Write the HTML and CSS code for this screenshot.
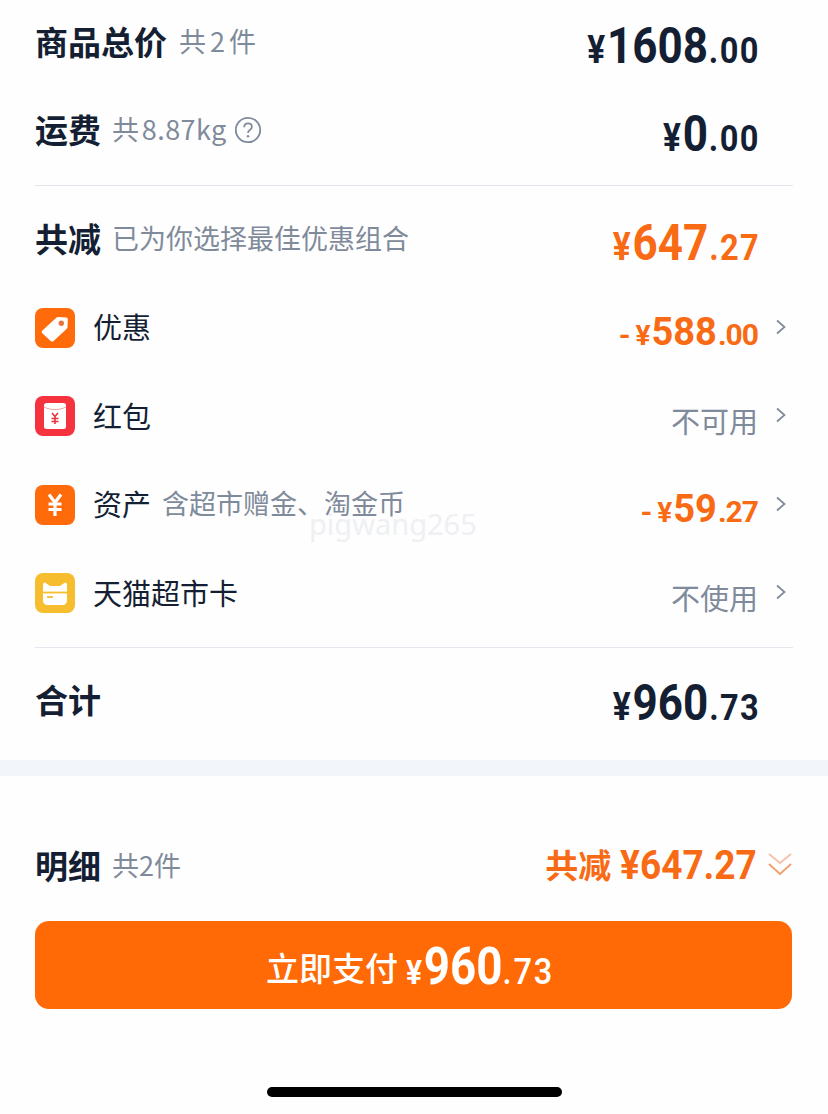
FILE: index.html
```html
<!DOCTYPE html>
<html lang="zh-CN">
<head>
    <meta charset="UTF-8">
    <meta name="viewport" content="width=device-width, initial-scale=1.0">
    <title>订单结算</title>
    <link rel="stylesheet" href="styles.css">
</head>
<body>
    <div class="page">
        <!-- Price summary -->
        <div class="summary">
            <div class="row row-first">
                <div class="label"><b class="title">商品总价</b><span class="note note-tight">共 2 件</span></div>
                <div class="amount"><span class="num"><span class="yen">¥</span><span class="big">1608</span><span class="small">.00</span></span></div>
            </div>
            <div class="row">
                <div class="label"><b class="title">运费</b><span class="note note-kg">共 8.87kg</span>
                    <svg class="help" viewBox="0 0 28 28" width="28" height="28"><circle cx="14" cy="14" r="12.2" fill="none" stroke="#7f8b9b" stroke-width="1.8"/><path d="M10.2 11.2c0-2.3 1.7-3.8 3.9-3.8s3.8 1.4 3.8 3.4c0 1.6-.9 2.4-2.1 3.2-1.2.8-1.8 1.4-1.8 2.9" fill="none" stroke="#7f8b9b" stroke-width="1.8"/><circle cx="14" cy="20.2" r="1.2" fill="#7f8b9b"/></svg>
                </div>
                <div class="amount"><span class="num"><span class="yen">¥</span><span class="big">0</span><span class="small">.00</span></span></div>
            </div>
        </div>

        <div class="summary discount">
            <div class="row">
                <div class="label"><b class="title">共减</b><span class="note">已为你选择最佳优惠组合</span></div>
                <div class="amount orange"><span class="num"><span class="yen">¥</span><span class="big">647</span><span class="small">.27</span></span></div>
            </div>

            <div class="row">
                <div class="label">
                    <svg class="icon" viewBox="0 0 40 40" width="40" height="40"><rect width="40" height="40" rx="8" fill="#ff6a0a"/><path d="M7.4 22.6 21.6 9.6c.5-.4 1-.6 1.6-.6l7.9.4c1 .1 1.7.8 1.7 1.8l-.3 8c0 .6-.3 1.1-.7 1.5L18.6 33c-.9.8-2.1.7-2.9-.1L7.3 25.3c-.8-.8-.7-2 .1-2.7z" fill="#fff"/><circle cx="26.3" cy="15.3" r="2.7" fill="#e8763a"/></svg>
                    <span class="name">优惠</span>
                </div>
                <div class="amount orange mid"><span class="num"><span class="minus">-</span><span class="yen">¥</span><span class="big">588</span><span class="small">.00</span></span><svg class="chev" viewBox="0 0 12 16" width="12" height="16"><path d="M2 1.5 9.5 8 2 14.5" fill="none" stroke="#7f8b9b" stroke-width="1.7"/></svg></div>
            </div>
            <div class="row">
                <div class="label">
                    <svg class="icon" viewBox="0 0 40 40" width="40" height="40"><rect width="40" height="40" rx="8" fill="#f5333f"/><rect x="9" y="7" width="22" height="26" rx="2.5" fill="#fff"/><path d="M9 11c6.5 3.4 15.5 3.4 22 0" fill="none" stroke="#f5a0a0" stroke-width="1"/><path d="M17 17l3 3.5 3-3.5M20 20.5V28M16.5 22.5h7M16.5 25.5h7" fill="none" stroke="#e8333c" stroke-width="1.6"/></svg>
                    <span class="name">红包</span>
                </div>
                <div class="amount mid"><span class="plain">不可用</span><svg class="chev" viewBox="0 0 12 16" width="12" height="16"><path d="M2 1.5 9.5 8 2 14.5" fill="none" stroke="#7f8b9b" stroke-width="1.7"/></svg></div>
            </div>
            <div class="row">
                <div class="label">
                    <svg class="icon" viewBox="0 0 40 40" width="40" height="40"><rect width="40" height="40" rx="8" fill="#ff6a0a"/><path d="M14 9.5l6 8 6-8M20 17.5V31M13.5 19h13M13.5 24.5h13" fill="none" stroke="#fff" stroke-width="3.2"/></svg>
                    <span class="name">资产</span><span class="note">含超市赠金、淘金币</span>
                </div>
                <div class="amount orange mid"><span class="num"><span class="minus">-</span><span class="yen">¥</span><span class="big">59</span><span class="small">.27</span></span><svg class="chev" viewBox="0 0 12 16" width="12" height="16"><path d="M2 1.5 9.5 8 2 14.5" fill="none" stroke="#7f8b9b" stroke-width="1.7"/></svg></div>
            </div>
            <div class="row">
                <div class="label">
                    <svg class="icon" viewBox="0 0 40 40" width="40" height="40"><rect width="40" height="40" rx="8" fill="#f6bd2e"/><path d="M8 11.5c0-1.5 1.5-2.2 2.7-1.400l4.300 3h10l4.300-3c1.200-.8 2.700-.1 2.700 1.400V28c0 2.200-1.800 4-4 4H12c-2.200 0-4-1.800-4-4z" fill="#fff"/><path d="M8 19.500h24" stroke="#f6bd2e" stroke-width="1.800"/><path d="M12 24h6" stroke="#f6bd2e" stroke-width="1.800"/></svg>
                    <span class="name">天猫超市卡</span>
                </div>
                <div class="amount mid"><span class="plain">不使用</span><svg class="chev" viewBox="0 0 12 16" width="12" height="16"><path d="M2 1.5 9.5 8 2 14.5" fill="none" stroke="#7f8b9b" stroke-width="1.7"/></svg></div>
            </div>
        </div>

        <div class="total">
            <div class="row">
                <div class="label"><b class="title">合计</b></div>
                <div class="amount"><span class="num"><span class="yen">¥</span><span class="big">960</span><span class="small">.73</span></span></div>
            </div>
        </div>

        <div class="band"></div>

        <!-- Bottom pay bar -->
        <div class="detail">
            <div class="label"><b class="title">明细</b><span class="note">共2件</span></div>
            <div class="detail-right">
                <span class="detail-off">共减</span><span class="detail-num">¥647.27</span>
                <svg class="double" viewBox="0 0 26 26" width="26" height="26"><path d="M2 3l11 9 11-9" fill="none" stroke="#f3c4ab" stroke-width="2"/><path d="M2 13l11 10 11-10" fill="none" stroke="#f2a070" stroke-width="2"/></svg>
            </div>
        </div>
        <button class="pay"><span class="pay-text">立即支付</span><span class="pay-num"><span class="pay-yen">¥</span><span class="pay-big">960</span><span class="pay-small">.73</span></span></button>
        <div class="home-wrap"><div class="home"></div></div>

        <div class="mark">pigwang265</div>
    </div>
</body>
</html>
```

FILE: styles.css
```css
* {
    margin: 0;
    padding: 0;
    box-sizing: border-box;
}

body {
    background: #fefefe;
    color: #151f33;
    font-family: "Noto Sans CJK SC", "Noto Sans", sans-serif;
}

.page {
    position: relative;
    width: 828px;
    height: 1114px;
    overflow: hidden;
}

.summary {
    padding: 0 35px;
}

.discount {
    border-top: 1px solid #e4e7ee;
    margin: 10px 35px 0;
    padding: 10px 0 9px;
}

.total {
    border-top: 1px solid #e4e7ee;
    margin: 0 35px;
    padding-top: 8px;
}

.row {
    height: 88.4px;
    display: flex;
    justify-content: space-between;
    align-items: center;
    padding-right: 35px;
}

.row-first {
    height: 87px;
}

.label {
    display: flex;
    align-items: center;
    padding-bottom: 2px;
}

.title {
    font-size: 33px;
    font-weight: 700;
    line-height: 44px;
    margin-bottom: 3px;
}

.total .title {
    margin-bottom: 1px;
}

.name {
    font-size: 29px;
    font-weight: 400;
    line-height: 44px;
    margin: 0 0 3px 18px;
}

.note {
    font-size: 27px;
    color: #7f8b9b;
    margin: 0 0 3px 11px;
    line-height: 44px;
}

.note-tight {
    margin-left: 12px;
    word-spacing: -2px;
}

.note-kg {
    letter-spacing: 0.4px;
    word-spacing: -4px;
}

.help {
    margin-left: 7px;
}

.icon {
    display: block;
}

.amount {
    display: flex;
    align-items: baseline;
    padding-top: 6px;
    font-family: "Roboto", sans-serif;
    font-weight: 700;
    color: #151f33;
}

/* no condensed font installed, squeeze Roboto to the DIN width */
.num {
    display: flex;
    align-items: baseline;
    transform: scaleX(0.88);
    transform-origin: right center;
}

.orange {
    color: #f86a14;
}

.yen {
    font-size: 38px;
    margin-right: 2px;
}

.big {
    font-size: 50px;
    line-height: 50px;
    margin-right: 1px;
}

.small {
    font-size: 37px;
    letter-spacing: 1.6px;
    margin-right: -2px;
}

.mid {
    position: relative;
}

.mid .num {
    transform: none;
}

.mid .big {
    font-size: 38px;
    margin-right: 1px;
}

.mid .yen {
    font-size: 28px;
    margin-right: 1px;
}

.mid .small {
    font-size: 30px;
    letter-spacing: -1px;
    margin-right: 0;
}

.minus {
    font-size: 30px;
    margin-right: 5px;
}

.plain {
    font-family: "Noto Sans CJK SC", sans-serif;
    font-size: 29px;
    font-weight: 400;
    color: #7f8b9b;
    line-height: 50px;
}

.chev {
    position: absolute;
    right: -29px;
    top: 18px;
}

.band {
    height: 16px;
    background: #f2f5f9;
    margin-top: 15px;
}

.detail {
    display: flex;
    justify-content: space-between;
    align-items: center;
    padding: 66px 35px 28px;
}

.detail-right {
    display: flex;
    align-items: center;
    color: #f86a14;
    font-weight: 700;
    line-height: 44px;
    margin-bottom: 3px;
}

.detail-off {
    font-size: 33px;
    margin: 0 9px 4px 0;
}

.detail-num {
    font-family: "Roboto", sans-serif;
    font-size: 40px;
    margin-left: -11px;
    transform: scaleX(0.925);
    transform-origin: right center;
}

.double {
    margin: 0 0 4px 10px;
}

.pay {
    display: flex;
    align-items: center;
    width: 757px;
    height: 88px;
    margin: 0 35px;
    padding-left: 231px;
    border: none;
    border-radius: 14px;
    background: #ff6a06;
    color: #fff;
    font-family: "Roboto", sans-serif;
    font-weight: 700;
}

.pay-text {
    font-family: "Noto Sans CJK SC", sans-serif;
    font-size: 33px;
    font-weight: 500;
    line-height: 44px;
    margin: 5px 8px 0 0;
}

.pay-num {
    display: flex;
    align-items: baseline;
    line-height: 52px;
    padding-top: 10px;
    transform: scaleX(0.88);
    transform-origin: left center;
}

.pay-yen {
    font-size: 34px;
    margin-right: 2px;
}

.pay-big {
    font-size: 52px;
}

.pay-small {
    font-size: 37px;
    font-weight: 500;
    letter-spacing: 2px;
}

.home-wrap {
    display: flex;
    justify-content: center;
    padding-top: 78px;
}

.home {
    width: 295px;
    height: 10px;
    border-radius: 5px;
    background: #000;
}

.mark {
    position: absolute;
    left: 309px;
    top: 504px;
    font-family: "Noto Sans", sans-serif;
    font-size: 29px;
    color: #eef0f3;
}
```
